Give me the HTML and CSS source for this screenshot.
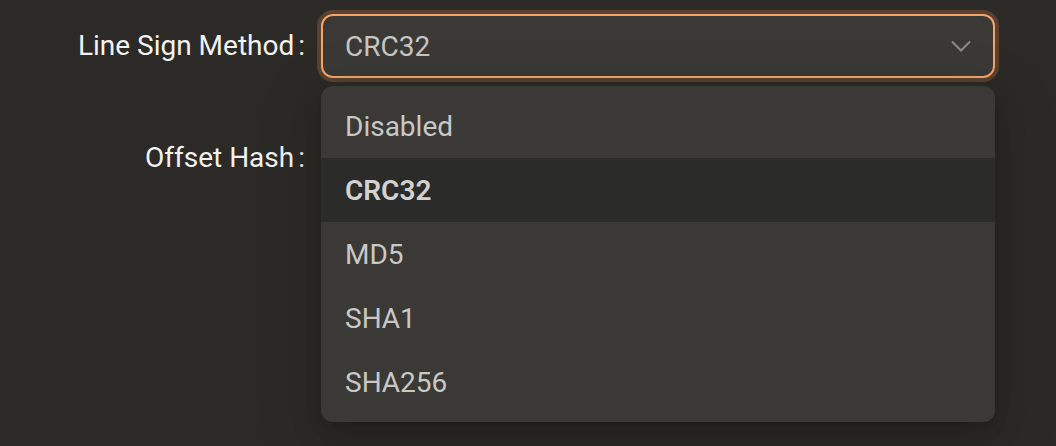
FILE: index.html
```html
<!DOCTYPE html>
<html lang="en">
<head>
<meta charset="utf-8">
<title>Select</title>
<link rel="stylesheet" href="styles.css">
</head>
<body>
<form class="form">
  <div class="row">
    <label class="label">Line Sign Method</label>
    <div class="control">
      <div class="select">
        <span class="select-value">CRC32</span>
        <svg class="chevron" width="20" height="14" viewBox="0 0 20 14" aria-hidden="true">
          <path d="M1 2.5 L10 11.5 L19 2.5" fill="none" stroke="currentColor" stroke-width="2"/>
        </svg>
      </div>
      <div class="dropdown">
        <div class="option">Disabled</div>
        <div class="option selected">CRC32</div>
        <div class="option">MD5</div>
        <div class="option">SHA1</div>
        <div class="option">SHA256</div>
      </div>
    </div>
  </div>
  <div class="row">
    <label class="label">Offset Hash</label>
    <div class="control"></div>
  </div>
</form>
</body>
</html>
```
FILE: styles.css
```css
* { box-sizing: border-box; }
html, body {
  margin: 0;
  height: 100%;
}
body {
  background: #2c2a26;
  font-family: Roboto, "Liberation Sans", sans-serif;
  font-size: 28px;
  color: #f0f0f0;
}
.form {
  display: flex;
  flex-direction: column;
  gap: 48px;
  padding-top: 14px;
}
.row {
  display: grid;
  grid-template-columns: 321px 674px;
  height: 64px;
  align-items: center;
}
.label {
  text-align: right;
  color: #f2f2f0;
  line-height: 64px;
}
.label::after {
  content: ":";
  margin-left: 4px;
  margin-right: 16px;
}
.control {
  position: relative;
  height: 64px;
}
.select {
  height: 64px;
  border: 2px solid #f3a468;
  border-radius: 12px;
  background: #3a3935;
  box-shadow: 0 0 0 4px #5a4130;
  display: flex;
  align-items: center;
  justify-content: space-between;
  padding: 0 22px 0 22px;
  color: #c5c5c3;
}
.chevron {
  color: #8c8b88;
  display: block;
}
.dropdown {
  position: absolute;
  top: 72px;
  left: 0;
  right: 0;
  background: #3a3935;
  border-radius: 12px;
  padding: 8px 0;
  box-shadow: 0 12px 32px 0 rgba(0,0,0,0.16), 0 6px 12px -8px rgba(0,0,0,0.24), 0 18px 56px 16px rgba(0,0,0,0.10);
  z-index: 10;
}
.option {
  height: 64px;
  display: flex;
  align-items: center;
  padding: 0 24px;
  color: #c8c8c6;
}
.option.selected {
  background: #2b2b2a;
  font-weight: 600;
  color: #d2d2d0;
}
```
